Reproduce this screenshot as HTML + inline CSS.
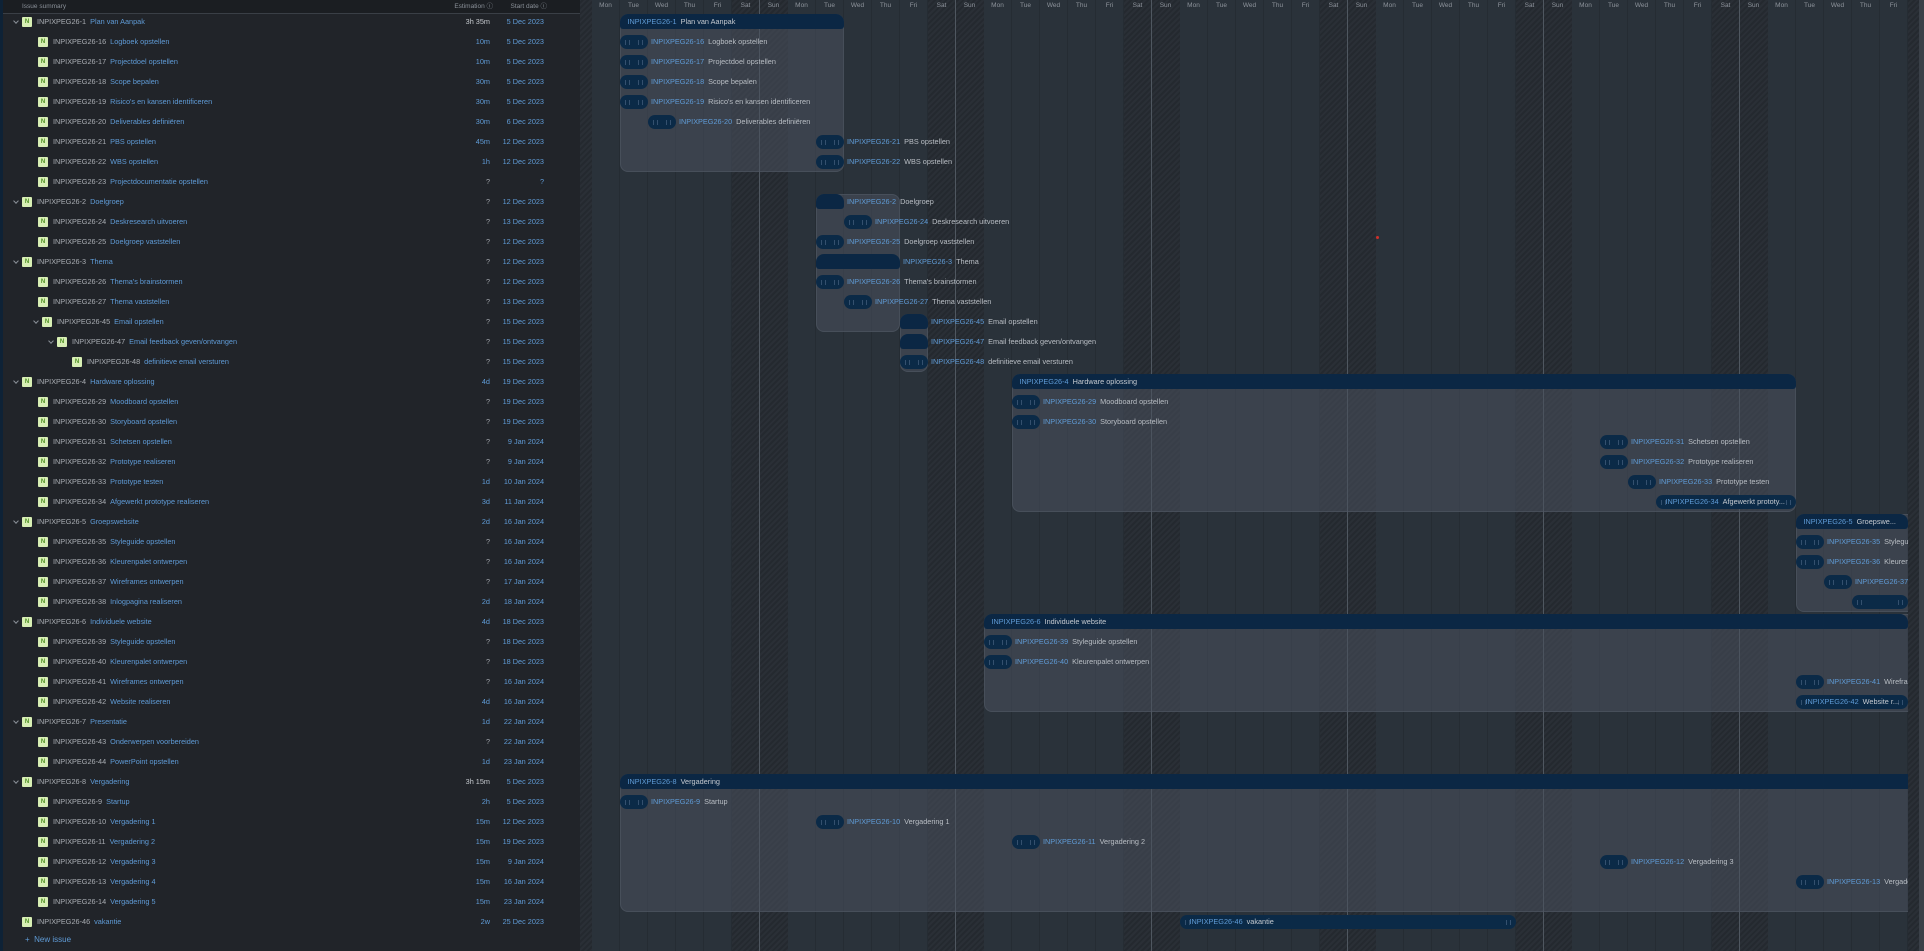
<!DOCTYPE html>
<html><head><meta charset="utf-8"><style>
*{margin:0;padding:0;box-sizing:border-box}
body{width:1924px;height:951px;overflow:hidden;background:#22262b;font-family:"Liberation Sans",sans-serif;font-size:7.3px;position:relative}
#lp{position:absolute;left:0;top:0;width:580px;height:951px;background:#212429;border-left:3px solid #0e2236}
#hd{position:absolute;left:0;top:0;width:580px;height:14px;background:#1b1e22;border-bottom:1px solid #3a3f46;color:#8a9098;font-size:6.5px;line-height:13px}
.r{position:absolute;left:0;width:577px;height:20px;line-height:20px;color:#a9adb3}
.n{position:absolute;top:0;height:20px;display:flex;align-items:center;white-space:nowrap}
.t{position:absolute;left:-8px;top:7px;width:4px;height:4px;border-right:1px solid #8a9098;border-bottom:1px solid #8a9098;transform:rotate(45deg)}
.ic{width:10px;height:10px;background:#d8efb4;color:#4d8f22;font-size:6px;font-weight:bold;line-height:10px;text-align:center;border-radius:1px;margin-right:5px}
.k{color:#a9adb3;margin-right:4px}
.ti{color:#5f9bd6}
.e{position:absolute;right:90px;color:#5f9bd6}
.e.g{color:#c5c9ce}.e.q{color:#a0a4aa}
.d{position:absolute;right:36px;color:#5f9bd6}
#gw{position:absolute;left:580px;top:0;width:1332px;height:951px;overflow:hidden;background:#2a323a}
#grid{position:absolute;left:11.5px;top:0;width:1340px;height:951px;background:repeating-linear-gradient(90deg,transparent 0 27px,#252c33 27px 28px)}
.hat{position:absolute;top:0;height:951px;background:repeating-linear-gradient(-45deg,#2a2f36 0 2px,#24292f 2px 4px)}
.wl{position:absolute;top:0;width:1px;height:951px;background:#4f5760}
#days{position:absolute;left:11.5px;top:0;height:12px;display:flex;color:#8d939b;font-size:6.5px;line-height:12px}
#days span{width:28px;text-align:center;flex:none}
.gc{position:absolute;background:rgba(72,80,92,0.55);border-radius:8px;border:1px solid rgba(80,88,100,0.6)}
.gh{position:absolute;height:15px;background:#0b2744;border-radius:8px 8px 3px 3px;color:#c5cad0;line-height:15px;padding-left:8px;white-space:nowrap;overflow:hidden}
.gh b,.lb b,.bi b{font-weight:normal;color:#5f9bd6;margin-right:4px}
.b{position:absolute;height:14px;background:#0b2a47;border-radius:7px}
.b::before,.b::after{content:"";position:absolute;top:5px;width:3px;height:5px;border-left:1px solid #34506e;border-right:1px solid #34506e}
.b::before{left:5px}.b::after{right:5px}
.lb{position:absolute;line-height:14px;color:#b9bec4;white-space:nowrap}
.bi{position:absolute;line-height:14px;color:#c5cad0;white-space:nowrap;padding-left:10px}
#sb{position:absolute;left:1908px;top:0;width:16px;height:951px;background:repeating-linear-gradient(-45deg,#2a2f36 0 2px,#24292f 2px 4px)}
#sb2{position:absolute;left:1919px;top:0;width:5px;height:951px;background:#3a4048}
</style></head><body>
<div id="lp">
<div id="hd"><span style="position:absolute;left:19px">Issue summary</span><span style="position:absolute;right:90px">Estimation ⓘ</span><span style="position:absolute;right:36px">Start date ⓘ</span></div>

<div class="r" style="top:12px"><div class="n" style="left:19px"><i class="t"></i><b class="ic">N</b><span class="k">INPIXPEG26-1</span><span class="ti">Plan van Aanpak</span></div><span class="e g">3h 35m</span><span class="d">5 Dec 2023</span></div>
<div class="r" style="top:32px"><div class="n" style="left:35px"><b class="ic">N</b><span class="k">INPIXPEG26-16</span><span class="ti">Logboek opstellen</span></div><span class="e">10m</span><span class="d">5 Dec 2023</span></div>
<div class="r" style="top:52px"><div class="n" style="left:35px"><b class="ic">N</b><span class="k">INPIXPEG26-17</span><span class="ti">Projectdoel opstellen</span></div><span class="e">10m</span><span class="d">5 Dec 2023</span></div>
<div class="r" style="top:72px"><div class="n" style="left:35px"><b class="ic">N</b><span class="k">INPIXPEG26-18</span><span class="ti">Scope bepalen</span></div><span class="e">30m</span><span class="d">5 Dec 2023</span></div>
<div class="r" style="top:92px"><div class="n" style="left:35px"><b class="ic">N</b><span class="k">INPIXPEG26-19</span><span class="ti">Risico's en kansen identificeren</span></div><span class="e">30m</span><span class="d">5 Dec 2023</span></div>
<div class="r" style="top:112px"><div class="n" style="left:35px"><b class="ic">N</b><span class="k">INPIXPEG26-20</span><span class="ti">Deliverables definiëren</span></div><span class="e">30m</span><span class="d">6 Dec 2023</span></div>
<div class="r" style="top:132px"><div class="n" style="left:35px"><b class="ic">N</b><span class="k">INPIXPEG26-21</span><span class="ti">PBS opstellen</span></div><span class="e">45m</span><span class="d">12 Dec 2023</span></div>
<div class="r" style="top:152px"><div class="n" style="left:35px"><b class="ic">N</b><span class="k">INPIXPEG26-22</span><span class="ti">WBS opstellen</span></div><span class="e">1h</span><span class="d">12 Dec 2023</span></div>
<div class="r" style="top:172px"><div class="n" style="left:35px"><b class="ic">N</b><span class="k">INPIXPEG26-23</span><span class="ti">Projectdocumentatie opstellen</span></div><span class="e q">?</span><span class="d">?</span></div>
<div class="r" style="top:192px"><div class="n" style="left:19px"><i class="t"></i><b class="ic">N</b><span class="k">INPIXPEG26-2</span><span class="ti">Doelgroep</span></div><span class="e q">?</span><span class="d">12 Dec 2023</span></div>
<div class="r" style="top:212px"><div class="n" style="left:35px"><b class="ic">N</b><span class="k">INPIXPEG26-24</span><span class="ti">Deskresearch uitvoeren</span></div><span class="e q">?</span><span class="d">13 Dec 2023</span></div>
<div class="r" style="top:232px"><div class="n" style="left:35px"><b class="ic">N</b><span class="k">INPIXPEG26-25</span><span class="ti">Doelgroep vaststellen</span></div><span class="e q">?</span><span class="d">12 Dec 2023</span></div>
<div class="r" style="top:252px"><div class="n" style="left:19px"><i class="t"></i><b class="ic">N</b><span class="k">INPIXPEG26-3</span><span class="ti">Thema</span></div><span class="e q">?</span><span class="d">12 Dec 2023</span></div>
<div class="r" style="top:272px"><div class="n" style="left:35px"><b class="ic">N</b><span class="k">INPIXPEG26-26</span><span class="ti">Thema's brainstormen</span></div><span class="e q">?</span><span class="d">12 Dec 2023</span></div>
<div class="r" style="top:292px"><div class="n" style="left:35px"><b class="ic">N</b><span class="k">INPIXPEG26-27</span><span class="ti">Thema vaststellen</span></div><span class="e q">?</span><span class="d">13 Dec 2023</span></div>
<div class="r" style="top:312px"><div class="n" style="left:39px"><i class="t"></i><b class="ic">N</b><span class="k">INPIXPEG26-45</span><span class="ti">Email opstellen</span></div><span class="e q">?</span><span class="d">15 Dec 2023</span></div>
<div class="r" style="top:332px"><div class="n" style="left:54px"><i class="t"></i><b class="ic">N</b><span class="k">INPIXPEG26-47</span><span class="ti">Email feedback geven/ontvangen</span></div><span class="e q">?</span><span class="d">15 Dec 2023</span></div>
<div class="r" style="top:352px"><div class="n" style="left:69px"><b class="ic">N</b><span class="k">INPIXPEG26-48</span><span class="ti">definitieve email versturen</span></div><span class="e q">?</span><span class="d">15 Dec 2023</span></div>
<div class="r" style="top:372px"><div class="n" style="left:19px"><i class="t"></i><b class="ic">N</b><span class="k">INPIXPEG26-4</span><span class="ti">Hardware oplossing</span></div><span class="e">4d</span><span class="d">19 Dec 2023</span></div>
<div class="r" style="top:392px"><div class="n" style="left:35px"><b class="ic">N</b><span class="k">INPIXPEG26-29</span><span class="ti">Moodboard opstellen</span></div><span class="e q">?</span><span class="d">19 Dec 2023</span></div>
<div class="r" style="top:412px"><div class="n" style="left:35px"><b class="ic">N</b><span class="k">INPIXPEG26-30</span><span class="ti">Storyboard opstellen</span></div><span class="e q">?</span><span class="d">19 Dec 2023</span></div>
<div class="r" style="top:432px"><div class="n" style="left:35px"><b class="ic">N</b><span class="k">INPIXPEG26-31</span><span class="ti">Schetsen opstellen</span></div><span class="e q">?</span><span class="d">9 Jan 2024</span></div>
<div class="r" style="top:452px"><div class="n" style="left:35px"><b class="ic">N</b><span class="k">INPIXPEG26-32</span><span class="ti">Prototype realiseren</span></div><span class="e q">?</span><span class="d">9 Jan 2024</span></div>
<div class="r" style="top:472px"><div class="n" style="left:35px"><b class="ic">N</b><span class="k">INPIXPEG26-33</span><span class="ti">Prototype testen</span></div><span class="e">1d</span><span class="d">10 Jan 2024</span></div>
<div class="r" style="top:492px"><div class="n" style="left:35px"><b class="ic">N</b><span class="k">INPIXPEG26-34</span><span class="ti">Afgewerkt prototype realiseren</span></div><span class="e">3d</span><span class="d">11 Jan 2024</span></div>
<div class="r" style="top:512px"><div class="n" style="left:19px"><i class="t"></i><b class="ic">N</b><span class="k">INPIXPEG26-5</span><span class="ti">Groepswebsite</span></div><span class="e">2d</span><span class="d">16 Jan 2024</span></div>
<div class="r" style="top:532px"><div class="n" style="left:35px"><b class="ic">N</b><span class="k">INPIXPEG26-35</span><span class="ti">Styleguide opstellen</span></div><span class="e q">?</span><span class="d">16 Jan 2024</span></div>
<div class="r" style="top:552px"><div class="n" style="left:35px"><b class="ic">N</b><span class="k">INPIXPEG26-36</span><span class="ti">Kleurenpalet ontwerpen</span></div><span class="e q">?</span><span class="d">16 Jan 2024</span></div>
<div class="r" style="top:572px"><div class="n" style="left:35px"><b class="ic">N</b><span class="k">INPIXPEG26-37</span><span class="ti">Wireframes ontwerpen</span></div><span class="e q">?</span><span class="d">17 Jan 2024</span></div>
<div class="r" style="top:592px"><div class="n" style="left:35px"><b class="ic">N</b><span class="k">INPIXPEG26-38</span><span class="ti">Inlogpagina realiseren</span></div><span class="e">2d</span><span class="d">18 Jan 2024</span></div>
<div class="r" style="top:612px"><div class="n" style="left:19px"><i class="t"></i><b class="ic">N</b><span class="k">INPIXPEG26-6</span><span class="ti">Individuele website</span></div><span class="e">4d</span><span class="d">18 Dec 2023</span></div>
<div class="r" style="top:632px"><div class="n" style="left:35px"><b class="ic">N</b><span class="k">INPIXPEG26-39</span><span class="ti">Styleguide opstellen</span></div><span class="e q">?</span><span class="d">18 Dec 2023</span></div>
<div class="r" style="top:652px"><div class="n" style="left:35px"><b class="ic">N</b><span class="k">INPIXPEG26-40</span><span class="ti">Kleurenpalet ontwerpen</span></div><span class="e q">?</span><span class="d">18 Dec 2023</span></div>
<div class="r" style="top:672px"><div class="n" style="left:35px"><b class="ic">N</b><span class="k">INPIXPEG26-41</span><span class="ti">Wireframes ontwerpen</span></div><span class="e q">?</span><span class="d">16 Jan 2024</span></div>
<div class="r" style="top:692px"><div class="n" style="left:35px"><b class="ic">N</b><span class="k">INPIXPEG26-42</span><span class="ti">Website realiseren</span></div><span class="e">4d</span><span class="d">16 Jan 2024</span></div>
<div class="r" style="top:712px"><div class="n" style="left:19px"><i class="t"></i><b class="ic">N</b><span class="k">INPIXPEG26-7</span><span class="ti">Presentatie</span></div><span class="e">1d</span><span class="d">22 Jan 2024</span></div>
<div class="r" style="top:732px"><div class="n" style="left:35px"><b class="ic">N</b><span class="k">INPIXPEG26-43</span><span class="ti">Onderwerpen voorbereiden</span></div><span class="e q">?</span><span class="d">22 Jan 2024</span></div>
<div class="r" style="top:752px"><div class="n" style="left:35px"><b class="ic">N</b><span class="k">INPIXPEG26-44</span><span class="ti">PowerPoint opstellen</span></div><span class="e">1d</span><span class="d">23 Jan 2024</span></div>
<div class="r" style="top:772px"><div class="n" style="left:19px"><i class="t"></i><b class="ic">N</b><span class="k">INPIXPEG26-8</span><span class="ti">Vergadering</span></div><span class="e g">3h 15m</span><span class="d">5 Dec 2023</span></div>
<div class="r" style="top:792px"><div class="n" style="left:35px"><b class="ic">N</b><span class="k">INPIXPEG26-9</span><span class="ti">Startup</span></div><span class="e">2h</span><span class="d">5 Dec 2023</span></div>
<div class="r" style="top:812px"><div class="n" style="left:35px"><b class="ic">N</b><span class="k">INPIXPEG26-10</span><span class="ti">Vergadering 1</span></div><span class="e">15m</span><span class="d">12 Dec 2023</span></div>
<div class="r" style="top:832px"><div class="n" style="left:35px"><b class="ic">N</b><span class="k">INPIXPEG26-11</span><span class="ti">Vergadering 2</span></div><span class="e">15m</span><span class="d">19 Dec 2023</span></div>
<div class="r" style="top:852px"><div class="n" style="left:35px"><b class="ic">N</b><span class="k">INPIXPEG26-12</span><span class="ti">Vergadering 3</span></div><span class="e">15m</span><span class="d">9 Jan 2024</span></div>
<div class="r" style="top:872px"><div class="n" style="left:35px"><b class="ic">N</b><span class="k">INPIXPEG26-13</span><span class="ti">Vergadering 4</span></div><span class="e">15m</span><span class="d">16 Jan 2024</span></div>
<div class="r" style="top:892px"><div class="n" style="left:35px"><b class="ic">N</b><span class="k">INPIXPEG26-14</span><span class="ti">Vergadering 5</span></div><span class="e">15m</span><span class="d">23 Jan 2024</span></div>
<div class="r" style="top:912px"><div class="n" style="left:19px"><b class="ic">N</b><span class="k">INPIXPEG26-46</span><span class="ti">vakantie</span></div><span class="e">2w</span><span class="d">25 Dec 2023</span></div>
<div class="r" style="top:930px;color:#5f9bd6;font-size:8px"><span style="position:absolute;left:22px">+&nbsp; New issue</span></div>
</div>

<div id="gw">
<div class="hat" style="left:0;width:11.5px"></div>
<div id="grid"></div>
<div class="hat" style="left:151.5px;width:56px"></div>
<div class="hat" style="left:347.5px;width:56px"></div>
<div class="hat" style="left:543.5px;width:56px"></div>
<div class="hat" style="left:739.5px;width:56px"></div>
<div class="hat" style="left:935.5px;width:56px"></div>
<div class="hat" style="left:1131.5px;width:56px"></div>
<div class="hat" style="left:1327.5px;width:56px"></div>
<div class="wl" style="left:179px"></div><div class="wl" style="left:375px"></div><div class="wl" style="left:571px"></div><div class="wl" style="left:767px"></div><div class="wl" style="left:963px"></div><div class="wl" style="left:1159px"></div>
<div id="days"><span>Mon</span><span>Tue</span><span>Wed</span><span>Thu</span><span>Fri</span><span>Sat</span><span>Sun</span><span>Mon</span><span>Tue</span><span>Wed</span><span>Thu</span><span>Fri</span><span>Sat</span><span>Sun</span><span>Mon</span><span>Tue</span><span>Wed</span><span>Thu</span><span>Fri</span><span>Sat</span><span>Sun</span><span>Mon</span><span>Tue</span><span>Wed</span><span>Thu</span><span>Fri</span><span>Sat</span><span>Sun</span><span>Mon</span><span>Tue</span><span>Wed</span><span>Thu</span><span>Fri</span><span>Sat</span><span>Sun</span><span>Mon</span><span>Tue</span><span>Wed</span><span>Thu</span><span>Fri</span><span>Sat</span><span>Sun</span><span>Mon</span><span>Tue</span><span>Wed</span><span>Thu</span><span>Fri</span><span>Sat</span></div>

<div class="gc" style="left:39.5px;top:14px;width:224px;height:158px"></div>
<div class="gh" style="left:39.5px;top:14px;width:224px"><b>INPIXPEG26-1</b>Plan van Aanpak</div>
<div class="b" style="left:39.5px;top:35px;width:28px"></div><div class="lb" style="left:71px;top:35px"><b>INPIXPEG26-16</b>Logboek opstellen</div>
<div class="b" style="left:39.5px;top:55px;width:28px"></div><div class="lb" style="left:71px;top:55px"><b>INPIXPEG26-17</b>Projectdoel opstellen</div>
<div class="b" style="left:39.5px;top:75px;width:28px"></div><div class="lb" style="left:71px;top:75px"><b>INPIXPEG26-18</b>Scope bepalen</div>
<div class="b" style="left:39.5px;top:95px;width:28px"></div><div class="lb" style="left:71px;top:95px"><b>INPIXPEG26-19</b>Risico's en kansen identificeren</div>
<div class="b" style="left:67.5px;top:115px;width:28px"></div><div class="lb" style="left:99px;top:115px"><b>INPIXPEG26-20</b>Deliverables definiëren</div>
<div class="b" style="left:235.5px;top:135px;width:28px"></div><div class="lb" style="left:267px;top:135px"><b>INPIXPEG26-21</b>PBS opstellen</div>
<div class="b" style="left:235.5px;top:155px;width:28px"></div><div class="lb" style="left:267px;top:155px"><b>INPIXPEG26-22</b>WBS opstellen</div>

<div class="gc" style="left:235.5px;top:194px;width:84px;height:138px"></div>
<div class="gh" style="left:235.5px;top:194px;width:28px"></div><div class="lb" style="left:267px;top:195px"><b>INPIXPEG26-2</b>Doelgroep</div>
<div class="b" style="left:263.5px;top:215px;width:28px"></div><div class="lb" style="left:295px;top:215px"><b>INPIXPEG26-24</b>Deskresearch uitvoeren</div>
<div class="b" style="left:235.5px;top:235px;width:28px"></div><div class="lb" style="left:267px;top:235px"><b>INPIXPEG26-25</b>Doelgroep vaststellen</div>
<div class="gh" style="left:235.5px;top:254px;width:84px"></div><div class="lb" style="left:323px;top:255px"><b>INPIXPEG26-3</b>Thema</div>
<div class="b" style="left:235.5px;top:275px;width:28px"></div><div class="lb" style="left:267px;top:275px"><b>INPIXPEG26-26</b>Thema's brainstormen</div>
<div class="b" style="left:263.5px;top:295px;width:28px"></div><div class="lb" style="left:295px;top:295px"><b>INPIXPEG26-27</b>Thema vaststellen</div>
<div class="gc" style="left:319.5px;top:314px;width:28px;height:58px"></div>
<div class="gh" style="left:319.5px;top:314px;width:28px"></div><div class="lb" style="left:351px;top:315px"><b>INPIXPEG26-45</b>Email opstellen</div>
<div class="gh" style="left:319.5px;top:334px;width:28px"></div><div class="lb" style="left:351px;top:335px"><b>INPIXPEG26-47</b>Email feedback geven/ontvangen</div>
<div class="b" style="left:319.5px;top:355px;width:28px"></div><div class="lb" style="left:351px;top:355px"><b>INPIXPEG26-48</b>definitieve email versturen</div>

<div class="gc" style="left:431.5px;top:374px;width:784px;height:138px"></div>
<div class="gh" style="left:431.5px;top:374px;width:784px"><b>INPIXPEG26-4</b>Hardware oplossing</div>
<div class="b" style="left:431.5px;top:395px;width:28px"></div><div class="lb" style="left:463px;top:395px"><b>INPIXPEG26-29</b>Moodboard opstellen</div>
<div class="b" style="left:431.5px;top:415px;width:28px"></div><div class="lb" style="left:463px;top:415px"><b>INPIXPEG26-30</b>Storyboard opstellen</div>
<div class="b" style="left:1019.5px;top:435px;width:28px"></div><div class="lb" style="left:1051px;top:435px"><b>INPIXPEG26-31</b>Schetsen opstellen</div>
<div class="b" style="left:1019.5px;top:455px;width:28px"></div><div class="lb" style="left:1051px;top:455px"><b>INPIXPEG26-32</b>Prototype realiseren</div>
<div class="b" style="left:1047.5px;top:475px;width:28px"></div><div class="lb" style="left:1079px;top:475px"><b>INPIXPEG26-33</b>Prototype testen</div>
<div class="b" style="left:1075.5px;top:495px;width:140px"></div><div class="bi" style="left:1075.5px;top:495px"><b>INPIXPEG26-34</b>Afgewerkt prototy...</div>

<div class="gc" style="left:1215.5px;top:514px;width:120px;height:98px"></div>
<div class="gh" style="left:1215.5px;top:514px;width:112px"><b>INPIXPEG26-5</b>Groepswe...</div>
<div class="b" style="left:1215.5px;top:535px;width:28px"></div><div class="lb" style="left:1247px;top:535px"><b>INPIXPEG26-35</b>Styleguide opstellen</div>
<div class="b" style="left:1215.5px;top:555px;width:28px"></div><div class="lb" style="left:1247px;top:555px"><b>INPIXPEG26-36</b>Kleurenpalet ontwerpen</div>
<div class="b" style="left:1243.5px;top:575px;width:28px"></div><div class="lb" style="left:1275px;top:575px"><b>INPIXPEG26-37</b>Wireframes ontwerpen</div>
<div class="b" style="left:1271.5px;top:595px;width:56px"></div><div class="lb" style="left:1331px;top:595px"><b>INPIXPEG26-38</b>Inlogpagina realiseren</div>

<div class="gc" style="left:403.5px;top:614px;width:940px;height:98px"></div>
<div class="gh" style="left:403.5px;top:614px;width:924px"><b>INPIXPEG26-6</b>Individuele website</div>
<div class="b" style="left:403.5px;top:635px;width:28px"></div><div class="lb" style="left:435px;top:635px"><b>INPIXPEG26-39</b>Styleguide opstellen</div>
<div class="b" style="left:403.5px;top:655px;width:28px"></div><div class="lb" style="left:435px;top:655px"><b>INPIXPEG26-40</b>Kleurenpalet ontwerpen</div>
<div class="b" style="left:1215.5px;top:675px;width:28px"></div><div class="lb" style="left:1247px;top:675px"><b>INPIXPEG26-41</b>Wireframes ontwerpen</div>
<div class="b" style="left:1215.5px;top:695px;width:112px"></div><div class="bi" style="left:1215.5px;top:695px"><b>INPIXPEG26-42</b>Website r...</div>

<div class="gc" style="left:39.5px;top:774px;width:1320px;height:138px"></div>
<div class="gh" style="left:39.5px;top:774px;width:1320px"><b>INPIXPEG26-8</b>Vergadering</div>
<div class="b" style="left:39.5px;top:795px;width:28px"></div><div class="lb" style="left:71px;top:795px"><b>INPIXPEG26-9</b>Startup</div>
<div class="b" style="left:235.5px;top:815px;width:28px"></div><div class="lb" style="left:267px;top:815px"><b>INPIXPEG26-10</b>Vergadering 1</div>
<div class="b" style="left:431.5px;top:835px;width:28px"></div><div class="lb" style="left:463px;top:835px"><b>INPIXPEG26-11</b>Vergadering 2</div>
<div class="b" style="left:1019.5px;top:855px;width:28px"></div><div class="lb" style="left:1051px;top:855px"><b>INPIXPEG26-12</b>Vergadering 3</div>
<div class="b" style="left:1215.5px;top:875px;width:28px"></div><div class="lb" style="left:1247px;top:875px"><b>INPIXPEG26-13</b>Vergadering 4</div>

<div class="b" style="left:599.5px;top:915px;width:336px"></div><div class="bi" style="left:599.5px;top:915px"><b>INPIXPEG26-46</b>vakantie</div>
<div style="position:absolute;left:796px;top:236px;width:3px;height:3px;background:#d0302a;border-radius:50%"></div>
</div>
<div id="sb"></div><div id="sb2"></div>
</body></html>
